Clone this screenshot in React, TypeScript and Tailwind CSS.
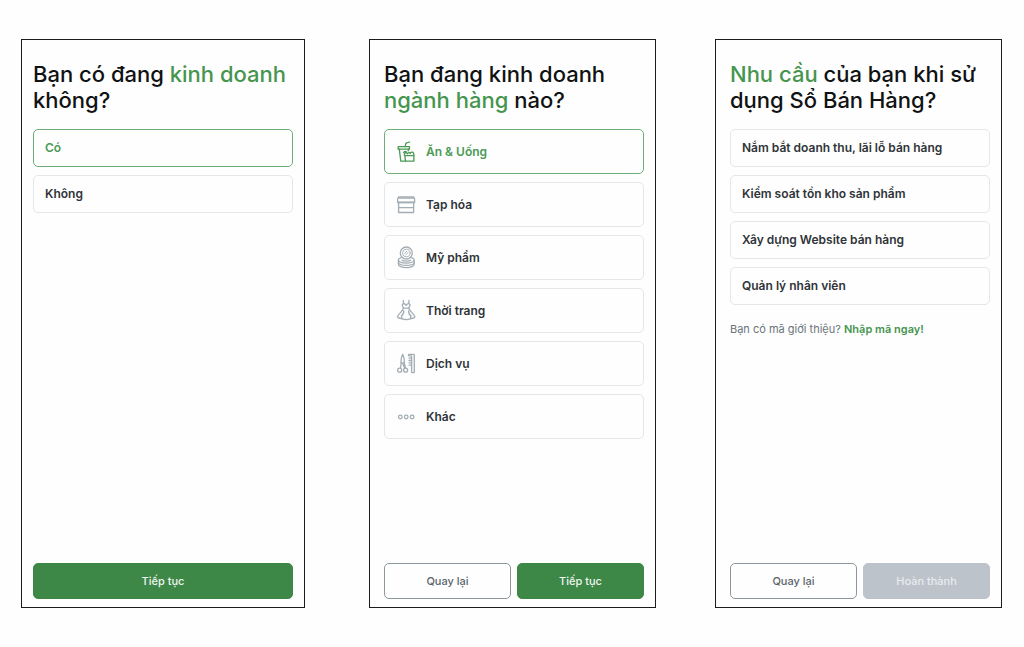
import type { ReactNode } from "react";
import clsx from "clsx";

type Option = {
  label: string;
  icon?: ReactNode;
  checked?: boolean;
};

const Icon = ({ children }: { children: ReactNode }) => (
  <svg
    viewBox="0 0 24 24"
    className="w-6 h-6 shrink-0"
    fill="none"
    stroke="currentColor"
    strokeWidth="1.3"
    strokeLinecap="round"
    strokeLinejoin="round"
    aria-hidden="true"
  >
    {children}
  </svg>
);

const FoodIcon = () => (
  <Icon>
    <path d="M15.6 2l-3 .9c-.5.2-.8.5-.9 1L11.2 6.6" />
    <path d="M4.2 6.7h11.3v2.5H4.2z" />
    <path d="M5.3 9.2l1.5 12h4.6M14.4 9.2l-.2 1.6" />
    <path d="M10.9 15.6h9v5.6h-8.4z" />
    <path d="M10.4 15.4l.2-2.2c1.2-.9 2.4-.4 2.9.6.6-1.4 2-1.6 2.7-.3.5-1.5 2.5-1.9 3.2-.6.6.9.5 1.9.4 2.7" />
    <path d="M9.6 12.6c.7-1.3 2.1-1.5 3-.4" />
  </Icon>
);

const GroceryIcon = () => (
  <Icon>
    <path d="M4.6 4h15l1 2v3.2H3.6V6z" />
    <path d="M4.6 5.200h15M4.6 10v9.500h15V10" />
    <path d="M3.6 9.2q.85 1.500 1.700 0 .85 1.500 1.700 0 .85 1.500 1.700 0 .85 1.500 1.700 0 .85 1.500 1.700 0 .85 1.500 1.700 0 .85 1.500 1.700 0 .85 1.500 1.700 0 .85 1.500 1.700 0 .85 1.500 1.700 0" />
    <path d="M4.6 14.600h15" />
  </Icon>
);

const CosmeticsIcon = () => (
  <Icon>
    <circle cx="12.3" cy="7" r="6" />
    <circle cx="12.3" cy="7" r="3.800" strokeWidth="0.9" />
    <path d="M10.8 7.300l2-2M11.900 8.700l2.200-2.200" strokeWidth="0.9" />
    <path d="M7.200 11.600C5.400 12.200 4.400 13 4.400 14.100c0 1.700 3.500 3 7.900 3s7.900-1.300 7.900-3c0-1.100-1-1.900-2.800-2.500" />
    <path d="M8 14.200c1.200 1.200 7.400 1.200 8.600 0" />
    <path d="M4.400 14.300v3.900c0 1.900 3.500 3.400 7.900 3.400s7.900-1.500 7.900-3.400v-3.900" />
    <path d="M4.400 17c1 1.500 4.200 2.400 7.900 2.400s6.900-.9 7.900-2.400" />
  </Icon>
);

const FashionIcon = () => (
  <Icon>
    <path d="M9.300 1.400l.2 3-1.300 1.500 1.300 3.300h5.300l1.300-3.300-1.300-1.500.2-3" />
    <path d="M9.500 4.400c1.100.3 2 1 2.700 2 .7-1 1.500-1.700 2.600-2" />
    <path d="M9.500 9.200C9 12 5.800 13.400 3.700 17.200c-.3.600-.1 1.100.4 1.400 1.100.6 2.300.9 3.600 1 2.800 1.200 6.200 1.200 9 0 1.300-.1 2.500-.4 3.600-1 .5-.3.700-.8.4-1.400-2.100-3.800-5.300-5.200-5.900-8" />
    <path d="M9.800 11.800c.1 2.500-.5 3.900-2.400 5.300.4.900.4 1.700.3 2.500M14.600 11.800c-.1 2.500.5 3.900 2.400 5.300-.4.900-.4 1.700-.3 2.500" />
  </Icon>
);

const ServiceIcon = () => (
  <Icon>
    <path d="M8.700 2.200c-1.300 2.400-1.900 5-1.700 8l1.700 1.300 1.600-1.300c.1-3-.3-5.600-1.600-8z" />
    <path d="M7.200 10.300l-.7 5.800M8.700 11.500l2 4.800M10.200 10.300l1.200 5.700" />
    <circle cx="5.700" cy="18.200" r="2" />
    <circle cx="11.600" cy="18.200" r="2" />
    <path d="M17.600 3.900v16.200c0 .4.200.6.600.6h1.500c.4 0 .6-.2.600-.6V3c0-.4-.2-.6-.6-.6h-4.500c-1 0-1 1.500 0 1.500h2.400" />
    <path d="M17.600 6.200H15M17.600 8.500H15M17.600 10.800H15M17.600 13.100H15" />
  </Icon>
);

const OtherIcon = () => (
  <Icon>
    <circle cx="6.300" cy="12" r="1.800" />
    <circle cx="12.200" cy="12" r="1.800" />
    <circle cx="18.100" cy="12" r="1.800" />
  </Icon>
);

const business: Option[] = [{ label: "Có", checked: true }, { label: "Không" }];

const industries: Option[] = [
  { label: "Ăn & Uống", icon: <FoodIcon />, checked: true },
  { label: "Tạp hóa", icon: <GroceryIcon /> },
  { label: "Mỹ phẩm", icon: <CosmeticsIcon /> },
  { label: "Thời trang", icon: <FashionIcon /> },
  { label: "Dịch vụ", icon: <ServiceIcon /> },
  { label: "Khác", icon: <OtherIcon /> },
];

const needs: Option[] = [
  { label: "Nắm bắt doanh thu, lãi lỗ bán hàng" },
  { label: "Kiểm soát tồn kho sản phẩm" },
  { label: "Xây dựng Website bán hàng" },
  { label: "Quản lý nhân viên" },
];

const OptionList = ({
  name,
  type = "radio",
  options,
}: {
  name: string;
  type?: "radio" | "checkbox";
  options: Option[];
}) => (
  <div className="flex flex-col gap-2">
    {options.map((option) => (
      <label
        key={option.label}
        className={clsx(
          "group relative flex items-center gap-2 rounded-[5px] border border-[#e3e7e9] text-[12px] leading-5 font-semibold text-[#2f3438] cursor-pointer",
          "has-checked:border-[#6fae78] has-checked:text-[#4a9a55] has-focus-visible:ring-2 has-focus-visible:ring-[#3d8747]/40",
          option.icon ? "h-[45px] px-[9px]" : "h-[38px] px-[11px]"
        )}
      >
        <input
          type={type}
          name={name}
          defaultChecked={option.checked}
          className="sr-only"
        />
        {option.icon && (
          <span className="text-[#a3adb4] group-has-checked:text-[#4a9a55]">
            {option.icon}
          </span>
        )}
        {option.label}
      </label>
    ))}
  </div>
);

const Screen = ({
  title,
  className,
  actions,
  children,
}: {
  title: ReactNode;
  className: string;
  actions: ReactNode;
  children: ReactNode;
}) => (
  <section
    className={clsx(
      "flex-1 flex flex-col min-w-0 border border-[#1c1c1c] pt-[21px] pb-2 pr-[11px] bg-[#fefefe]",
      className
    )}
  >
    <h2 className="mb-4 text-[22px] leading-[26px] font-medium text-[#101213]">
      {title}
    </h2>
    {children}
    <div className="mt-auto pt-6 flex gap-1.5">{actions}</div>
  </section>
);

const buttonBase =
  "flex-1 h-9 rounded-[5px] border text-[11px] leading-4 font-medium";

const BackButton = () => (
  <button
    type="button"
    className={clsx(buttonBase, "border-[#8d979c] bg-[#fefefe] text-[#5a656b]")}
  >
    Quay lại
  </button>
);

const NextButton = () => (
  <button
    type="button"
    className={clsx(buttonBase, "border-[#3d8747] bg-[#3d8747] text-[#eef6ef]")}
  >
    Tiếp tục
  </button>
);

const App = () => {
  return (
    <main className="min-h-screen flex bg-[#fefefe] py-[39px] pl-[21px] pr-[22px] font-[Inter,sans-serif]">
      {/* Step 1 */}
      <Screen
        className="pl-[11px]"
        title={
          <>
            Bạn có đang <span className="text-[#46954f]">kinh doanh</span> không?
          </>
        }
        actions={<NextButton />}
      >
        <OptionList name="business" options={business} />
      </Screen>

      {/* Step 2 */}
      <Screen
        className="ml-16 pl-[14px]"
        title={
          <>
            Bạn đang kinh doanh{" "}
            <span className="text-[#46954f]">ngành hàng</span> nào?
          </>
        }
        actions={
          <>
            <BackButton />
            <NextButton />
          </>
        }
      >
        <OptionList name="industry" options={industries} />
      </Screen>

      {/* Step 3 */}
      <Screen
        className="ml-[59px] pl-[14px]"
        title={
          <>
            <span className="text-[#46954f]">Nhu cầu</span> của bạn khi sử dụng
            Sổ Bán Hàng?
          </>
        }
        actions={
          <>
            <BackButton />
            <button
              type="button"
              disabled
              className={clsx(
                buttonBase,
                "border-[#bcc3ca] bg-[#bcc3ca] text-[#e8ebee]"
              )}
            >
              Hoàn thành
            </button>
          </>
        }
      >
        <OptionList name="needs" type="checkbox" options={needs} />
        <p className="mt-4 text-[11px] leading-4 text-[#69747a]">
          Bạn có mã giới thiệu?{" "}
          <a href="#referral" className="font-semibold text-[#46954f]">
            Nhập mã ngay!
          </a>
        </p>
      </Screen>
    </main>
  );
};

export default App;
